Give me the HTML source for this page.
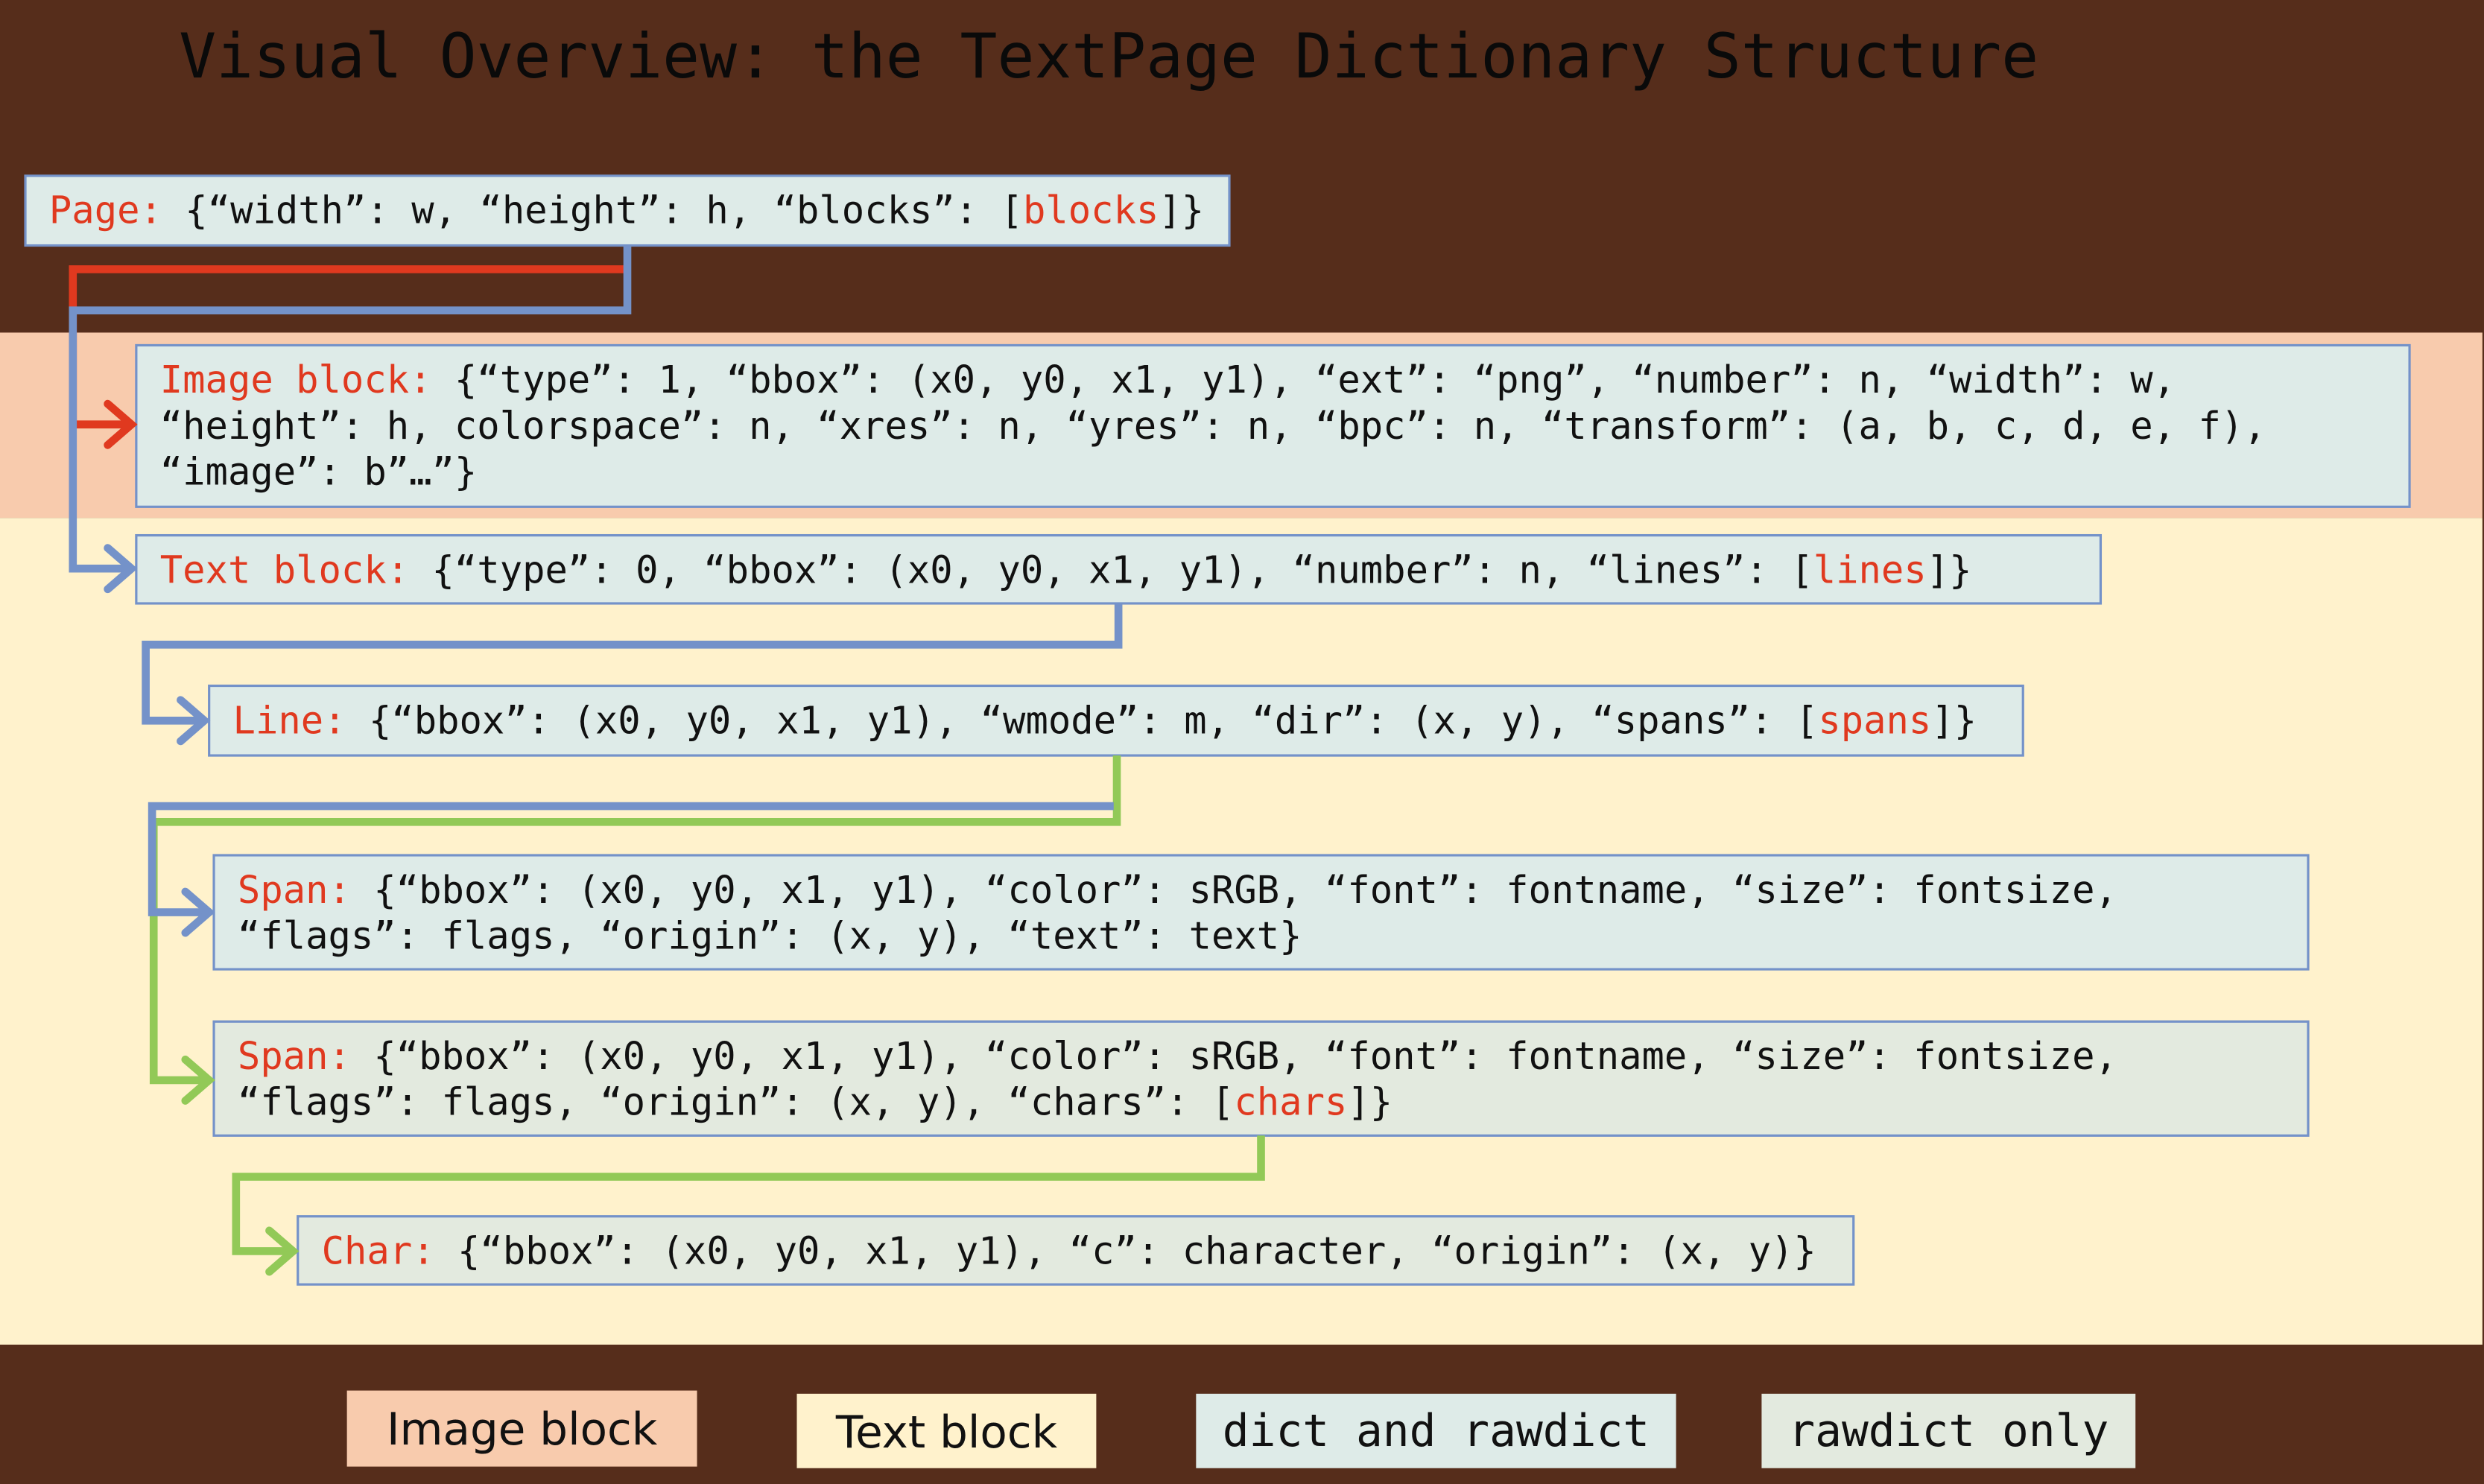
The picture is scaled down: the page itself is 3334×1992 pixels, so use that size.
<!DOCTYPE html>
<html><head><meta charset="utf-8"><style>
html,body{margin:0;padding:0;background:#562d1b;}
svg{display:block;}
text{font-family:"DejaVu Sans Mono","Liberation Mono",monospace;}
</style></head><body>
<svg width="3334" height="1992" viewBox="0 0 1568 937" preserveAspectRatio="none" xmlns="http://www.w3.org/2000/svg">
<rect x="0" y="0" width="1568" height="937" fill="#562d1b"/>
<rect x="0" y="210" width="1567" height="117" fill="#f8cbad"/>
<rect x="0" y="327" width="1567" height="522" fill="#fff2cc"/>
<text x="113" y="49" font-size="39" fill="#0a0a0a">Visual Overview: the TextPage Dictionary Structure</text>

<g fill="#deebe8" stroke="#7492c9" stroke-width="1.5">
<rect x="16" y="111" width="760" height="44"/>
<rect x="86" y="218" width="1435" height="102"/>
<rect x="86" y="338" width="1240" height="43"/>
<rect x="132" y="433" width="1145" height="44"/>
<rect x="135" y="540" width="1322" height="72"/>
<rect x="135" y="645" width="1322" height="72" fill="#e3eadf"/>
<rect x="188" y="768" width="982" height="43" fill="#e3eadf"/>
</g>

<g fill="none" stroke-width="5" stroke-linejoin="miter">
<polyline points="394,170 46,170 46,268 82,268" stroke="#e0391f"/>
<polyline points="68,255 83,268 68,281" stroke="#e0391f" stroke-linecap="round"/>
<polyline points="396,155 396,196 46,196 46,359 82,359" stroke="#7492c9"/>
<polyline points="68,346 83,359 68,372" stroke="#7492c9" stroke-linecap="round"/>
<polyline points="706,381 706,407 92,407 92,455 128,455" stroke="#7492c9"/>
<polyline points="114,442 129,455 114,468" stroke="#7492c9" stroke-linecap="round"/>
<polyline points="705,477 705,519 97,519 97,682 131,682" stroke="#92c957"/>
<polyline points="117,669 132,682 117,695" stroke="#92c957" stroke-linecap="round"/>
<polyline points="703,509 96,509 96,576 131,576" stroke="#7492c9"/>
<polyline points="117,563 132,576 117,589" stroke="#7492c9" stroke-linecap="round"/>
<polyline points="796,717 796,743 149,743 149,790 184,790" stroke="#92c957"/>
<polyline points="170,777 185,790 170,803" stroke="#92c957" stroke-linecap="round"/>
</g>

<g font-size="23.75" fill="#111">
<text x="31" y="141"><tspan fill="#e0391f">Page:</tspan> {“width”: w, “height”: h, “blocks”: [<tspan fill="#e0391f">blocks</tspan>]}</text>
<text x="101" y="248"><tspan fill="#e0391f">Image block:</tspan> {“type”: 1, “bbox”: (x0, y0, x1, y1), “ext”: “png”, “number”: n, “width”: w,</text>
<text x="101" y="277">“height”: h, colorspace”: n, “xres”: n, “yres”: n, “bpc”: n, “transform”: (a, b, c, d, e, f),</text>
<text x="101" y="306">“image”: b”…”}</text>
<text x="101" y="368"><tspan fill="#e0391f">Text block:</tspan> {“type”: 0, “bbox”: (x0, y0, x1, y1), “number”: n, “lines”: [<tspan fill="#e0391f">lines</tspan>]}</text>
<text x="147" y="463"><tspan fill="#e0391f">Line:</tspan> {“bbox”: (x0, y0, x1, y1), “wmode”: m, “dir”: (x, y), “spans”: [<tspan fill="#e0391f">spans</tspan>]}</text>
<text x="150" y="570"><tspan fill="#e0391f">Span:</tspan> {“bbox”: (x0, y0, x1, y1), “color”: sRGB, “font”: fontname, “size”: fontsize,</text>
<text x="150" y="599">“flags”: flags, “origin”: (x, y), “text”: text}</text>
<text x="150" y="675"><tspan fill="#e0391f">Span:</tspan> {“bbox”: (x0, y0, x1, y1), “color”: sRGB, “font”: fontname, “size”: fontsize,</text>
<text x="150" y="704">“flags”: flags, “origin”: (x, y), “chars”: [<tspan fill="#e0391f">chars</tspan>]}</text>
<text x="203" y="798"><tspan fill="#e0391f">Char:</tspan> {“bbox”: (x0, y0, x1, y1), “c”: character, “origin”: (x, y)}</text>
</g>

<rect x="219" y="878" width="221" height="48" fill="#f8cbad"/>
<rect x="503" y="880" width="189" height="47" fill="#fff2cc"/>
<rect x="755" y="880" width="303" height="47" fill="#deebe8"/>
<rect x="1112" y="880" width="236" height="47" fill="#e3eadf"/>
<g fill="#111" font-size="28">
<text x="329.5" y="912" text-anchor="middle" style="font-family:'DejaVu Sans','Liberation Sans',sans-serif">Image block</text>
<text x="597.5" y="914" text-anchor="middle" style="font-family:'DejaVu Sans','Liberation Sans',sans-serif">Text block</text>
<text x="906.5" y="913" text-anchor="middle">dict and rawdict</text>
<text x="1230" y="913" text-anchor="middle">rawdict only</text>
</g>
</svg>
</body></html>
